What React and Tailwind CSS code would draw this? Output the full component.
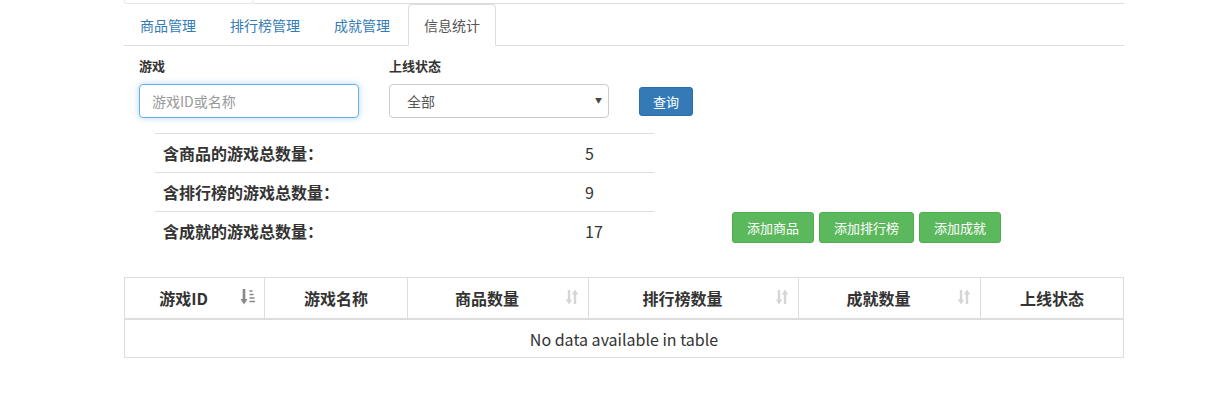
import { useState } from "react";

const tabs = ["商品管理", "排行榜管理", "成就管理", "信息统计"];

const stats = [
  { label: "含商品的游戏总数量：", value: 5 },
  { label: "含排行榜的游戏总数量：", value: 9 },
  { label: "含成就的游戏总数量：", value: 17 },
];

// column widths follow the reference table
const columns = [
  { title: "游戏ID", width: "w-[140px]", sort: "active" },
  { title: "游戏名称", width: "w-[143px]", sort: null },
  { title: "商品数量", width: "w-[181px]", sort: "both" },
  { title: "排行榜数量", width: "w-[210px]", sort: "both" },
  { title: "成就数量", width: "w-[182px]", sort: "both" },
  { title: "上线状态", width: "flex-1", sort: null },
];

function SortIcon({ type }) {
  if (type === "active") {
    return (
      <svg width="16" height="18" viewBox="0 0 16 18" className="text-[#888]">
        <path d="M4 1v12" stroke="currentColor" strokeWidth="2.6" />
        <path d="M0.5 11L4 16.5 7.5 11z" fill="currentColor" />
        <path d="M9.5 3h3M9.5 6.5h4M9.5 10h5M9.5 13.5h5.5" stroke="currentColor" strokeWidth="1.3" />
      </svg>
    );
  }
  return (
    <svg width="16" height="18" viewBox="0 0 16 18" className="text-[#d5d5d5]">
      <path d="M5 2v11" stroke="currentColor" strokeWidth="2.4" />
      <path d="M1.8 11.5L5 16.5l3.2-5z" fill="currentColor" />
      <path d="M11 5v11" stroke="currentColor" strokeWidth="2.4" />
      <path d="M7.8 6.5L11 1.5l3.2 5z" fill="currentColor" />
    </svg>
  );
}

export default function App() {
  const [activeTab, setActiveTab] = useState(3);
  const [keyword, setKeyword] = useState("");
  const [status, setStatus] = useState("all");

  return (
    <div className="min-h-[397px] bg-white font-['Noto_Sans_CJK_SC','Microsoft_YaHei',sans-serif] text-[#333]">
      <div className="ml-[124px] w-[1000px]">
        {/* leftover of the tab strip above */}
        <div className="flex h-[4px]">
          <div className="w-[130px] rounded-b-[3px] border-x border-b border-[#e6e6e6]" />
          <div className="flex-1 border-b border-[#dcdcdc]" />
        </div>

        {/* tabs */}
        <ul className="flex h-[42px] border-b border-[#ddd]">
          {tabs.map((tab, i) => (
            <li key={tab} className="mr-[2px] -mb-px">
              <button
                onClick={() => setActiveTab(i)}
                className={
                  i === activeTab
                    ? "h-[42px] rounded-t-[4px] border border-[#ddd] border-b-white bg-white px-[15px] text-[14px] leading-[20px] text-[#555]"
                    : "h-[42px] rounded-t-[4px] border border-transparent px-[15px] text-[14px] leading-[20px] text-[#337ab7]"
                }
              >
                {tab}
              </button>
            </li>
          ))}
        </ul>

        {/* search form */}
        <div className="flex pt-[10px]">
          <div className="w-[250px] px-[15px]">
            <label className="block text-[13px] font-bold leading-[20px]">游戏</label>
            <input
              value={keyword}
              onChange={(e) => setKeyword(e.target.value)}
              placeholder="游戏ID或名称"
              className="mt-[8px] h-[34px] w-[220px] rounded-[4px] border border-[#66afe9] px-[12px] text-[14px] shadow-[0_0_6px_rgba(102,175,233,0.5)] outline-none placeholder:text-[#999]"
            />
          </div>
          <div className="w-[250px] px-[15px]">
            <label className="block text-[13px] font-bold leading-[20px]">上线状态</label>
            <div className="relative mt-[8px] h-[34px] w-[220px]">
              <select
                value={status}
                onChange={(e) => setStatus(e.target.value)}
                className="h-[34px] w-[220px] appearance-none rounded-[4px] border border-[#ccc] bg-white pl-[17px] text-[14px] text-[#555] outline-none"
              >
                <option value="all">全部</option>
                <option value="on">上线</option>
                <option value="off">下线</option>
              </select>
              <span className="pointer-events-none absolute right-[7px] top-[11px] text-[7px] text-[#444]">▼</span>
            </div>
          </div>
          <div className="px-[15px] pt-[31px]">
            <button className="h-[29px] rounded-[3px] border border-[#2e6da4] bg-[#337ab7] px-[13px] text-[13px] text-white">
              查询
            </button>
          </div>
        </div>

        {/* totals and add buttons */}
        <div className="mt-[15px] flex">
          <div className="ml-[31px] w-[499px]">
            {stats.map((s) => (
              <div key={s.label} className="flex h-[39px] items-center border-t border-[#ddd] text-[16px]">
                <span className="w-[430px] pl-[8px] font-bold">{s.label}</span>
                <span>{s.value}</span>
              </div>
            ))}
          </div>
          <div className="ml-[78px] mb-[7px] flex gap-[5px] self-end">
            <button className="h-[31px] rounded-[3px] border border-[#4cae4c] bg-[#5cb85c] px-[14px] text-[13px] text-white">添加商品</button>
            <button className="h-[31px] rounded-[3px] border border-[#4cae4c] bg-[#5cb85c] px-[14px] text-[13px] text-white">添加排行榜</button>
            <button className="h-[31px] rounded-[3px] border border-[#4cae4c] bg-[#5cb85c] px-[14px] text-[13px] text-white">添加成就</button>
          </div>
        </div>

        {/* data table */}
        <div className="mt-[27px] border border-[#ddd]">
          <div className="flex h-[42px] border-b-2 border-[#ddd]">
            {columns.map((c, i) => (
              <div
                key={c.title}
                className={
                  (c.sort ? "relative flex items-center justify-center pl-[8px] pr-[30px] " : "flex items-center justify-center px-[8px] ") +
                  c.width +
                  (i < columns.length - 1 ? " border-r border-[#ddd]" : "")
                }
              >
                <span className="text-[16px] font-bold">{c.title}</span>
                {c.sort && (
                  <span className="absolute right-[8px] top-[10px]">
                    <SortIcon type={c.sort} />
                  </span>
                )}
              </div>
            ))}
          </div>
          <div className="flex h-[37px] items-center justify-center text-[16px]">No data available in table</div>
        </div>
      </div>
    </div>
  );
}
